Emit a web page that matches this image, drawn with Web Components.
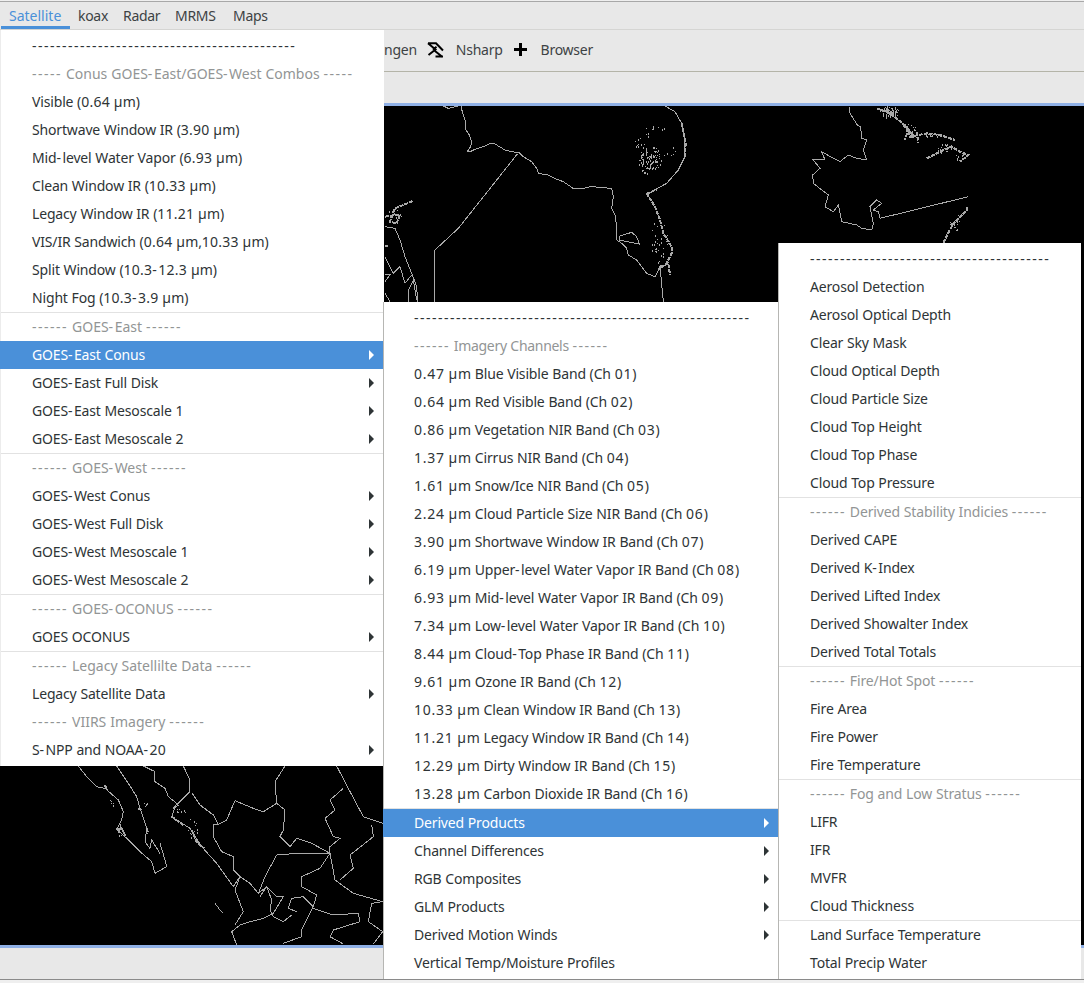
<!DOCTYPE html>
<html><head><meta charset="utf-8">
<style>
html,body{margin:0;padding:0;background:#efefef}
body{width:1084px;height:983px;overflow:hidden;position:relative;font:14px "Noto Sans",sans-serif;color:#2e3436}
</style></head><body>
<app-shell></app-shell>
<script>
function markup(t){
  return t.replace(/&/g,'&amp;').replace(/-+|[0-9µ.]+/g,m=>`<span class="${m[0]==='-'?'d':'n'}">${m}</span>`);
}
class MenuBar extends HTMLElement{
  constructor(){super();const s=this.attachShadow({mode:'open'});
  s.innerHTML=`<style>
  :host{display:flex;height:27px;padding-left:1px;border-top:1px solid #a8a8a8;margin-top:1px;background:#e8e8e8;font-size:14px;color:#3d4244;box-sizing:content-box}
  span{box-sizing:border-box;padding:1px 0 0 8px;height:27px;line-height:25px;border-bottom:3px solid transparent;letter-spacing:-.3px}
  span.a{color:#4a90d9;border-bottom-color:#4a90d9;letter-spacing:0}
  </style><span class="a" style="width:69px">Satellite</span><span style="width:45px">koax</span><span style="width:52px">Radar</span><span style="width:58px">MRMS</span><span>Maps</span>`;}
}
customElements.define('menu-bar',MenuBar);

class ToolBar extends HTMLElement{
  constructor(){super();const s=this.attachShadow({mode:'open'});
  s.innerHTML=`<style>
  :host{display:flex;align-items:center;height:43px;padding:0 0 2px 384px;background:#e8e8e8;border-top:1px solid #d5d5d3;border-bottom:1px solid #b4b4a8;box-sizing:border-box}
  .t{color:#3d4244;letter-spacing:-.25px}
  svg{display:block;flex:none}
  </style>
  <span class="t">ngen</span>
  <svg style="margin-left:10px" width="17" height="16" viewBox="0 0 17 16"><path d="M1 1.200H9L16 8.500M1 1.200L8.500 7.500L1.500 13M6 7.800L9.500 4.800M8 9L15.500 15M8.500 14.500H16" fill="none" stroke="#000" stroke-width="2"/></svg>
  <span class="t" style="margin-left:12px">Nsharp</span>
  <svg style="margin-left:11px" width="13" height="13" viewBox="0 0 13 13"><path d="M5 0h3v5h5v3H8v5H5V8H0V5h5z" fill="#000"/></svg>
  <span class="t" style="margin-left:14px">Browser</span>`;}
}
customElements.define('tool-bar',ToolBar);

class PlainBar extends HTMLElement{
  constructor(){super();const s=this.attachShadow({mode:'open'});
  s.innerHTML=`<style>:host{display:block;background:#e8e8e8;height:31px}</style>`;}
}
customElements.define('plain-bar',PlainBar);

class MapCanvas extends HTMLElement{
  constructor(){super();const s=this.attachShadow({mode:'open'});
  const z3=[
   "243,18 248,40 258,70 258,90 268,105 275,125 272,140 262,155 270,155 285,148 305,142 330,131 345,132 355,138 375,150 395,155 418,158 430,170 455,185 470,205 475,220 505,225 530,238 550,245 565,255 580,266 610,265 630,260 665,262 695,266 700,290 695,325 707,348 710,400 710,420 725,430 740,445 745,465 770,480 785,500 800,520 825,530 835,510 840,500 850,605",
   "412,162 235,385 165,450 165,605",
   "718,420 720,408 755,397 770,410 778,432 718,420",
   "15,380 45,385 60,420 75,470 95,520 110,560 113,605",
   "15,470 40,520 60,500 75,550 95,525",
   "85,605 85,570 100,540 110,600",
   "15,525 30,525 15,545","15,580 30,605",
   "190,18 205,25 235,18",
   "855,18 885,35 905,70 915,120 915,170 895,210 860,250 815,275 800,282"];
  const z3t=[
   "800,280 825,320 840,360 850,400 875,440 875,460 860,490 835,510","840,500 865,490 870,525",
   "905,70 917,130 915,170","45,325 70,315 100,302","15,350 45,345 60,345 50,370 30,365 45,325",
   "800,282 830,268","15,437 25,437"];
  const z4=[
   "240,20 240,40 262,75 272,80 275,115 290,120 280,150 290,180 260,175 235,165 210,185 190,175 155,155 165,180 130,180 150,205 128,225 130,250 175,285 165,320 190,335 205,315 215,365 260,375 275,385 305,390 310,370 300,320 320,300 335,310 310,330 325,335 330,355 595,290"];
  const z4t=["320,25 360,40 410,80 420,110 470,100 510,105 555,120","470,175 510,155 545,140 570,155 595,165 570,185","520,428 550,370 590,330 590,320","350,25 365,50","415,85 405,120","440,95 445,130","330,30 375,40","400,75 430,105"];
  const z5=[
   "235,78 260,110 290,140 315,145 355,180 370,215 365,240 350,268 380,295 420,335 455,365 465,400 500,380 495,360 480,310",
   "350,78 385,130 410,170 420,205 440,265 435,305 450,325 455,300 480,340",
   "430,78 465,95 465,125 495,145 505,170 530,190 515,230 570,265 605,320 650,370 700,440 720,410 750,430 775,460 800,440 830,470 850,470 820,520 790,535 750,545 720,555 695,575 710,615",
   "550,78 570,120 570,155 530,195","575,158 600,195 640,225 655,255 640,255 640,290 665,335 700,350 700,390 720,410 705,450 730,515 705,555",
   "855,78 825,125 830,190 790,215 760,205 705,182 680,240 650,255","830,190 855,210 850,270 840,290 870,320 890,295 935,310 990,340 890,340 830,345 795,410 775,460",
   "1010,78 1045,145 1090,230 1148,250","1030,145 990,180 1005,210 975,235 1000,290 1020,295 990,320 990,340 1005,420 1060,460 1148,485",
   "1115,255 1120,290 1050,345 1060,385 1020,420","990,340 960,385 905,410 905,440 950,465 940,500 905,570 905,590 850,610",
   "940,505 1000,525 1075,520 1080,545 1000,570 990,590 1030,612","940,500 910,470 875,475 865,505 890,515",
   "1148,485 1115,490 1105,545 1148,575 1120,612","780,470 800,440 815,480 810,510 820,530 850,545 875,525","645,490 660,510 670,520"];
  const z5t=["315,135 320,150","350,268 365,265 380,295","515,230 550,255","575,270 590,305 612,325","520,205 535,195","415,205 425,210","440,265 445,280"];
  const pl=(a)=>a.map(p=>`<polyline points="${p}"/>`).join('');
  let seed=12345;const rnd=()=>(seed=(seed*16807)%2147483647)/2147483647;
  const spots=[[645,161,7,13,55],[655,158,6,12,45],[640,143,5,5,12],[655,130,12,11,10],[668,151,8,6,6],[659,240,9,22,30],
    [889,112,10,6,45],[910,130,6,7,30],[933,135,9,2,18],[945,148,8,5,18],[960,156,8,5,12],[955,222,6,10,16],
    [395,213,7,5,14],[112,803,3,4,5],[120,830,3,7,10],[180,810,5,6,8],[192,830,5,12,12],[145,806,3,5,5]];
  let sp='';
  for(const [cx,cy,rx,ry,n] of spots)for(let i=0;i<n;i++){const a=rnd()*6.283,r=Math.sqrt(rnd());
    sp+=`<rect x="${Math.round(cx+rx*r*Math.cos(a))}" y="${Math.round(cy+ry*r*Math.sin(a))}" width="1" height="${rnd()<.4?2:1}"/>`}
  s.innerHTML=`<style>
  :host{display:block;height:839px;background:#000;border-top:3px solid #8fb0e6;border-bottom:3px solid #8fb0e6;box-sizing:content-box;overflow:hidden}
  svg{display:block;width:1084px;height:839px}
  polyline{fill:none;stroke:#a9a9a9;vector-effect:non-scaling-stroke;stroke-width:1}
  .t polyline{stroke-width:2;stroke-dasharray:4 1}
  rect{fill:#a9a9a9}
  </style>
  <svg viewBox="0 106 1084 839" shape-rendering="crispEdges">
   <g transform="translate(380 100) scale(.33333)">${pl(z3)}<g class="t">${pl(z3t)}</g></g>
   <g transform="translate(770 100) scale(.33333)">${pl(z4)}<g class="t">${pl(z4t)}</g></g>
   <g transform="translate(0 740) scale(.33333)">${pl(z5)}<g class="t">${pl(z5t)}</g></g>
   <g>${sp}</g>
  </svg>`;}
}
customElements.define('map-canvas',MapCanvas);

class PopMenu extends HTMLElement{
  constructor(){super();const s=this.attachShadow({mode:'open'});
  s.innerHTML=`<style>
  :host{display:block;position:absolute;box-sizing:border-box;background:#fff;padding:2px 0 2px;border-left:1px solid #b6b6b3;font-size:14px;color:#2e3436}
  </style><slot></slot>`;}
}
customElements.define('pop-menu',PopMenu);

class MenuRow extends HTMLElement{
  constructor(){super();const s=this.attachShadow({mode:'open'});
  s.innerHTML=`<style>
  :host{display:flex;align-items:center;height:28px;padding-left:var(--pad,30px);padding-right:10px;line-height:28px;white-space:nowrap;letter-spacing:-.16px;word-spacing:.3px}
  :host([head]){color:#929595;letter-spacing:var(--hs,0)}
  :host([hl]){background:#4a90d9;color:#fff;margin-left:-1px;padding-left:calc(var(--pad,30px) + 1px)}
  .x{flex:1}
  .d{letter-spacing:1.5px}
  .n{letter-spacing:var(--ns,.7px)}
  svg{display:none;flex:none;fill:currentColor}
  :host([sub]) svg{display:block}
  </style><span id="t"></span><span class="x"></span><svg width="5" height="10" viewBox="0 0 5 10"><path d="M0 0l5 5-5 5z"/></svg>`;}
  connectedCallback(){this.shadowRoot.getElementById('t').innerHTML=markup(this.getAttribute('t')||'')}
}
customElements.define('menu-row',MenuRow);

class MenuSep extends HTMLElement{
  constructor(){super();const s=this.attachShadow({mode:'open'});
  s.innerHTML=`<style>:host{display:block;height:1px;background:#e2e2e2}</style>`;}
}
customElements.define('menu-sep',MenuSep);

const D=n=>'-'.repeat(n);
const m1=[`r:${D(44)}`,`h:----- Conus GOES-East/GOES-West Combos -----`,'r:Visible (0.64 µm)','r:Shortwave Window IR (3.90 µm)','r:Mid-level Water Vapor (6.93 µm)','r:Clean Window IR (10.33 µm)','r:Legacy Window IR (11.21 µm)','r:VIS/IR Sandwich (0.64 µm,10.33 µm)','r:Split Window (10.3-12.3 µm)','r:Night Fog (10.3-3.9 µm)','s','h:------ GOES-East ------','H:GOES-East Conus','S:GOES-East Full Disk','S:GOES-East Mesoscale 1','S:GOES-East Mesoscale 2','s','h:------ GOES-West ------','S:GOES-West Conus','S:GOES-West Full Disk','S:GOES-West Mesoscale 1','S:GOES-West Mesoscale 2','s','h:------ GOES-OCONUS ------','S:GOES OCONUS','s','h:------ Legacy Satellilte Data ------','S:Legacy Satellite Data','h:------ VIIRS Imagery ------','S:S-NPP and NOAA-20'];
const m2=[`r:${D(56)}`,'h:------ Imagery Channels ------','r:0.47 µm Blue Visible Band (Ch 01)','r:0.64 µm Red Visible Band (Ch 02)','r:0.86 µm Vegetation NIR Band (Ch 03)','r:1.37 µm Cirrus NIR Band (Ch 04)','r:1.61 µm Snow/Ice NIR Band (Ch 05)','r:2.24 µm Cloud Particle Size NIR Band (Ch 06)','r:3.90 µm Shortwave Window IR Band (Ch 07)','r:6.19 µm Upper-level Water Vapor IR Band (Ch 08)','r:6.93 µm Mid-level Water Vapor IR Band (Ch 09)','r:7.34 µm Low-level Water Vapor IR Band (Ch 10)','r:8.44 µm Cloud-Top Phase IR Band (Ch 11)','r:9.61 µm Ozone IR Band (Ch 12)','r:10.33 µm Clean Window IR Band (Ch 13)','r:11.21 µm Legacy Window IR Band (Ch 14)','r:12.29 µm Dirty Window IR Band (Ch 15)','r:13.28 µm Carbon Dioxide IR Band (Ch 16)','s','H:Derived Products','S:Channel Differences','S:RGB Composites','S:GLM Products','S:Derived Motion Winds','r:Vertical Temp/Moisture Profiles'];
const m3=[`r:${D(40)}`,'r:Aerosol Detection','r:Aerosol Optical Depth','r:Clear Sky Mask','r:Cloud Optical Depth','r:Cloud Particle Size','r:Cloud Top Height','r:Cloud Top Phase','r:Cloud Top Pressure','s','h:------ Derived Stability Indicies ------','r:Derived CAPE','r:Derived K-Index','r:Derived Lifted Index','r:Derived Showalter Index','r:Derived Total Totals','s','h:------ Fire/Hot Spot ------','r:Fire Area','r:Fire Power','r:Fire Temperature','s','h:------ Fog and Low Stratus ------','r:LIFR','r:IFR','r:MVFR','r:Cloud Thickness','s','r:Land Surface Temperature','r:Total Precip Water'];
const esc=t=>t.replace(/&/g,'&amp;').replace(/"/g,'&quot;');
function rows(a){return a.map(x=>{ if(x==='s')return '<menu-sep></menu-sep>';
  const k=x[0],t=esc(x.slice(2));
  const at=k==='h'?'head':k==='H'?'hl sub':k==='S'?'sub':'';
  return `<menu-row t="${t}" ${at}></menu-row>`}).join('')}

class AppShell extends HTMLElement{
  constructor(){super();const s=this.attachShadow({mode:'open'});
  s.innerHTML=`<style>
  :host{display:flex;flex-direction:column;height:983px;position:relative;overflow:hidden;background:#efefef}
  .m1{left:0;top:30px;width:384px;height:736px;border-left-color:#ececec}
  .m2{left:383px;top:302px;width:396px;height:677px}
  .m3{left:778px;top:243px;width:303px;height:736px}
  .end{border-bottom:1px solid #8a8a8a;height:32px;box-sizing:border-box}
  </style>
  <menu-bar></menu-bar>
  <tool-bar></tool-bar>
  <plain-bar></plain-bar>
  <map-canvas></map-canvas>
  <plain-bar class="end"></plain-bar>
  <pop-menu class="m1" style="--pad:31px;--ns:.25px">${rows(m1)}</pop-menu>
  <pop-menu class="m2" style="--pad:30px;--ns:.75px;--hs:-.3px">${rows(m2)}</pop-menu>
  <pop-menu class="m3" style="--pad:31px;--hs:-.14px">${rows(m3)}</pop-menu>`;}
}
customElements.define('app-shell',AppShell);
</script>
</body></html>
